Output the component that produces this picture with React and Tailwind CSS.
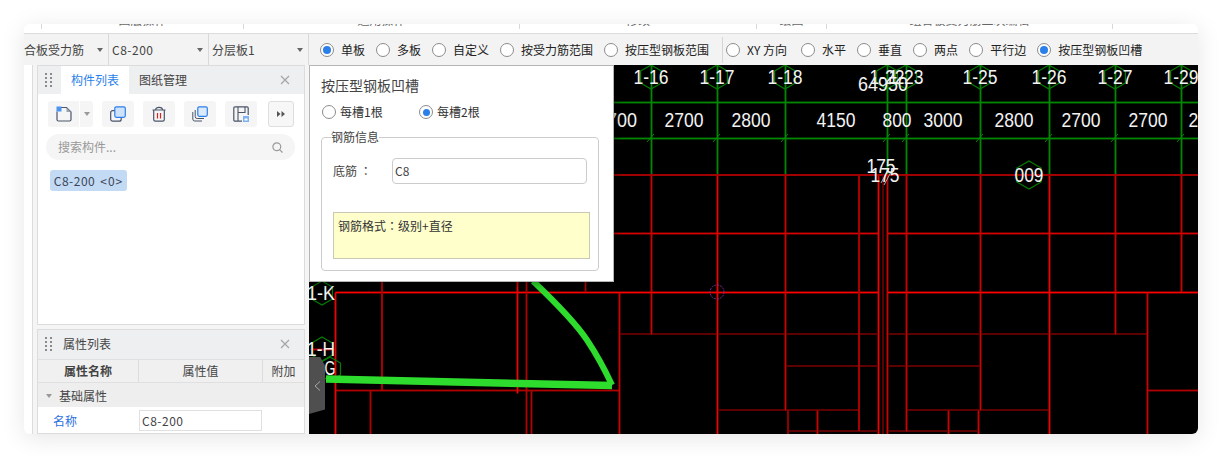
import React from "react";

const RED = "#f00000";
const DARK = "#d00000";
const DEEP = "#5c0000";
const GREEN = "#008800";

// [x1,y1,x2,y2,color,width]
const lines = [
  [613, 102, 1198, 102, GREEN, 1], [613, 138, 1198, 138, GREEN, 1],
  ...[651, 717, 785, 887, 906, 980, 1049, 1115, 1181].map((x) => [x, 65, x, 175, GREEN, 1]),
  [613, 175, 1198, 175, "#a00000", 2],
  [613, 233, 878, 233, "#d80000", 1], [887, 233, 1198, 233, "#d80000", 1],
  [335, 292, 878, 292, "#ff0000", 1], [887, 292, 1198, 292, "#ff0000", 1],
  [619, 334, 878, 334, DEEP, 2], [887, 334, 1147, 334, DEEP, 2],
  [785, 366, 878, 366, DEEP, 2], [887, 366, 980, 366, DEEP, 2],
  [717, 410, 859, 410, DEEP, 2], [906, 410, 1049, 410, DEEP, 2],
  [787, 431, 878, 431, DEEP, 2], [887, 431, 978, 431, DEEP, 2],
  [335, 390, 619, 390, "#b00000", 1], [1147, 390, 1198, 390, "#b00000", 1],
  [651, 175, 651, 334, DARK, 1], [717, 175, 717, 434, RED, 1], [785, 175, 785, 410, DARK, 1],
  [788, 410, 788, 434, "#8c0000", 2], [817, 410, 817, 434, DARK, 1], [859, 175, 859, 431, "#a80000", 2],
  [878, 175, 878, 434, RED, 1], [883, 175, 883, 434, DEEP, 2], [887, 175, 887, 434, DARK, 1],
  [906, 175, 906, 431, DARK, 1], [948, 410, 948, 434, DARK, 1], [978, 410, 978, 434, DARK, 1],
  [980, 175, 980, 410, DARK, 1], [1049, 175, 1049, 434, RED, 1], [1115, 175, 1115, 334, DARK, 1],
  [1147, 292, 1147, 434, DARK, 1], [1181, 175, 1181, 292, DARK, 1], [619, 292, 619, 434, DARK, 1],
  [335, 292, 335, 434, RED, 1], [382, 281, 382, 390, "#a80000", 2], [370, 390, 370, 434, "#b00000", 1],
  [517, 281, 517, 393, RED, 1], [526, 281, 526, 434, "#b00000", 1], [531, 390, 531, 434, "#b00000", 1],
  [585, 281, 585, 292, "#b00000", 1], [310, 349, 335, 349, "#c00000", 1],
];

// One-pixel lines sit on a pixel's centre; the reference's soft edge is a faint wider stroke beneath.
const snap = (v, w) => (w === 1 ? v + 0.5 : v);

const hexes = [[651, 77], [717, 77], [785, 77], [887, 77], [906, 77], [980, 77], [1049, 77], [1115, 77], [1181, 77], [1029, 175], [322, 293], [322, 349], [330, 369]];
const hexPts = (cx, cy, r = 12) =>
  [[0, -r], [r * 0.87, -r / 2], [r * 0.87, r / 2], [0, r], [-r * 0.87, r / 2], [-r * 0.87, -r / 2]]
    .map(([a, b]) => `${cx + a},${cy + b}`).join(" ");

// [text, centre x, baseline y, squeezed width]
const labels = [
  ["1-16", 651, 84, 35], ["1-17", 717, 84, 35], ["1-18", 785, 84, 35], ["1-22", 887, 84, 35], ["1-23", 906, 84, 35], ["1-25", 980, 84, 35], ["1-26", 1049, 84, 35], ["1-27", 1115, 84, 35], ["1-29", 1181, 84, 35],
  ["64950", 883, 91, 50],
  ["700", 622, 127, 30], ["2700", 684, 127, 39], ["2800", 751, 127, 39], ["4150", 836, 127, 39], ["800", 897, 127, 29], ["3000", 943, 127, 39], ["2800", 1014, 127, 39], ["2700", 1081, 127, 39], ["2700", 1148, 127, 39], ["2700", 1208, 127, 39],
  ["175", 881, 173, 29], ["175", 885, 182, 29], ["009", 1029, 182, 29],
  ["1-K", 321, 300, 28], ["1-H", 321, 356, 28], ["G", 330, 375, 11],
];

function CadCanvas() {
  return (
    <svg width="889" height="369" viewBox="309 65 889 369" className="block">
      <rect x="309" y="65" width="889" height="369" fill="#000" />
      {lines.filter((l) => l[5] === 1).map(([a, b, c, d, col], i) => (
        <line key={i} x1={a + 0.5} y1={b + 0.5} x2={c + 0.5} y2={d + 0.5} stroke={col} strokeOpacity="0.4" strokeWidth="3" />
      ))}
      {lines.map(([a, b, c, d, col, w], i) => (
        <line key={i} x1={snap(a, w)} y1={snap(b, w)} x2={snap(c, w)} y2={snap(d, w)} stroke={col} strokeWidth={w} />
      ))}
      {[651, 717, 785, 887, 906, 980, 1049, 1115, 1181].map((x) => (
        <line key={x} x1={x - 4} y1={142} x2={x + 3} y2={134} stroke={GREEN} strokeWidth="1" />
      ))}
      {hexes.map(([x, y], i) => (
        <polygon key={i} points={hexPts(x, y, i === 9 ? 14 : 12)} fill="none" stroke="#008000" strokeWidth="1.2" />
      ))}
      <circle cx="717" cy="292" r="7" fill="none" stroke="#7a2a90" strokeWidth="1" strokeDasharray="2 1" />
      <path d="M326 379 L612 385.5" fill="none" stroke="#2edc2e" strokeWidth="7.5" />
      <path d="M533 281 C555 302 575 322 587 340 C597 355 605 370 612 385" fill="none" stroke="#2edc2e" strokeWidth="6" />
      <path d="M881 183 L889 168 M884 185 L891 172" stroke="#aaaaaa" strokeWidth="1" />
      {labels.map(([t, x, y, w], i) => (
        <text key={i} x={x} y={y} textAnchor="middle" fontSize="20" textLength={w} lengthAdjust="spacingAndGlyphs" fill="#f2f2f2" fontFamily="'Liberation Sans', sans-serif">{t}</text>
      ))}
    </svg>
  );
}

function Radio({ checked, label, labelClass = "" }) {
  return (
    <span className="flex items-center gap-[7px] whitespace-nowrap">
      <span className="flex w-[14px] h-[14px] shrink-0 items-center justify-center rounded-full border border-[#8c8c8c] bg-white">
        {checked && <span className="block w-[8px] h-[8px] rounded-full bg-[#2b7fe8]" />}
      </span>
      <span className={labelClass}>{label}</span>
    </span>
  );
}

function Dropdown({ label, className, textClass = "" }) {
  return (
    <div className={`relative flex h-full items-center overflow-hidden border-r border-[#d9d9d9] text-[#444] ${className}`}>
      <span className={`whitespace-nowrap text-[12px] ${textClass}`}>{label}</span>
      <span className="absolute right-[5px] top-[14px] w-0 h-0 border-x-[3px] border-x-transparent border-t-[4px] border-t-[#666]" />
    </div>
  );
}

function Grip() {
  return (
    <svg width="7" height="14" viewBox="0 0 7 14" fill="#8a8a8a" className="shrink-0">
      {[0, 4, 8, 12].map((y) => (
        <g key={y}>
          <rect x="0" y={y} width="2" height="2" />
          <rect x="5" y={y} width="2" height="2" />
        </g>
      ))}
    </svg>
  );
}

function Close() {
  return (
    <svg width="10" height="10" viewBox="0 0 10 10" stroke="#a5a5a5" strokeWidth="1.2" className="shrink-0">
      <path d="M1 1 L9 9 M9 1 L1 9" />
    </svg>
  );
}

function ToolBtn({ children }) {
  return (
    <div className="flex h-[26px] w-[32px] items-center justify-center rounded-[3px] bg-[#f5f5f5]">{children}</div>
  );
}

const IconNew = () => (
  <svg width="16" height="16" viewBox="0 0 16 16" fill="none" className="-mt-px">
    <path d="M5 1.5 H10.5 L15 6 V13.5 a1.5 1.5 0 0 1 -1.5 1.5 H2.5 a1.5 1.5 0 0 1 -1.5 -1.5 V5.5" stroke="#4a5468" strokeWidth="1.2" />
    <path d="M10.5 1.5 V6 H15" fill="#9aa2b0" />
    <rect x="0.5" y="0.5" width="5" height="5" fill="#4d94ef" />
  </svg>
);
const IconCopy = () => (
  <svg width="16" height="16" viewBox="0 0 16 16" fill="none">
    <rect x="0.7" y="4.7" width="10.5" height="10.5" rx="2" stroke="#4a5468" strokeWidth="1.2" />
    <rect x="4.8" y="0.8" width="10.5" height="10.5" rx="1.5" fill="#cfe2fb" stroke="#2b7fe8" strokeWidth="1.2" />
  </svg>
);
const IconTrash = () => (
  <svg width="14" height="16" viewBox="0 0 14 16" fill="none" stroke="#4a5468" strokeWidth="1.2">
    <path d="M0.5 4 H13.5 M3.5 4 C3.5 0.5 10.5 0.5 10.5 4 M1.7 4 V13.5 a1.7 1.7 0 0 0 1.7 1.7 H10.6 a1.7 1.7 0 0 0 1.7 -1.7 V4" />
    <path d="M5.5 7 V12.5 M8.5 7 V12.5" stroke="#e02020" />
  </svg>
);
const IconStack = () => (
  <svg width="16" height="16" viewBox="0 0 16 16" fill="none">
    <path d="M0.8 6 V13 a2 2 0 0 0 2 2 H10" stroke="#4a5468" />
    <path d="M3.2 4 V10.5 a2 2 0 0 0 2 2 H12" stroke="#4a5468" />
    <rect x="5.8" y="0.8" width="9.5" height="9.5" rx="1.5" fill="#dbe9fc" stroke="#2b7fe8" strokeWidth="1.2" />
  </svg>
);
const IconSave = () => (
  <svg width="16" height="16" viewBox="0 0 16 16" fill="none">
    <path d="M9 15.2 H2 a1.2 1.2 0 0 1 -1.2 -1.2 V2 a1.2 1.2 0 0 1 1.2 -1.2 H14 a1.2 1.2 0 0 1 1.2 1.2 V9" stroke="#4a5468" strokeWidth="1.2" />
    <path d="M5 1 V15 M5 6.5 H12 V1" stroke="#4a5468" strokeWidth="1.1" />
    <rect x="10" y="10" width="6" height="6" fill="#7fb1f3" />
    <rect x="11.5" y="12.5" width="3" height="2" fill="#fff" />
  </svg>
);

function ComponentPanel() {
  return (
    <section className="h-[260px] shrink-0 border border-[#dcdcdc] bg-white">
      <div className="flex h-[28px] items-center bg-[#eeeff1] pl-[7px] pr-[14px] text-[12px]">
        <Grip />
        <div className="ml-[9px] flex h-full w-[68px] items-center justify-center bg-white text-[#2b7fe8]">构件列表</div>
        <div className="ml-[10px] flex-1 text-[#444]">图纸管理</div>
        <Close />
      </div>
      <div className="mt-[7px] flex items-center pl-[10px]">
        <div className="flex h-[26px] w-[45px] overflow-hidden rounded-[3px] bg-[#f5f5f5]">
          <div className="flex w-[32px] items-center justify-center border-r border-white"><IconNew /></div>
          <div className="flex flex-1 items-center justify-center">
            <span className="w-0 h-0 border-x-[3px] border-x-transparent border-t-[4px] border-t-[#999]" />
          </div>
        </div>
        <div className="ml-[9px] flex gap-[9px]">
          <ToolBtn><IconCopy /></ToolBtn>
          <ToolBtn><IconTrash /></ToolBtn>
          <ToolBtn><IconStack /></ToolBtn>
          <ToolBtn><IconSave /></ToolBtn>
        </div>
        <div className="ml-[11px] flex h-[26px] w-[26px] items-center justify-center rounded-[3px] border border-[#dedede] bg-[#f7f7f7]">
          <svg width="8" height="6" viewBox="0 0 8 6" fill="#555"><path d="M0 0 L3.5 3 L0 6Z M4.5 0 L8 3 L4.5 6Z" /></svg>
        </div>
      </div>
      <div className="ml-[8px] mr-[9px] mt-[7px] flex h-[26px] items-center justify-between rounded-full bg-[#f5f5f5] pl-[12px] pr-[12px] text-[12px] text-[#999]">
        <span>搜索构件...</span>
        <svg width="11" height="11" viewBox="0 0 11 11" fill="none" stroke="#9a9a9a" strokeWidth="1.2"><circle cx="4.8" cy="4.8" r="3.9" /><path d="M7.8 7.8 L10.5 10.5" /></svg>
      </div>
      <div className="ml-[12px] mt-[10px] flex h-[21px] w-[77px] items-center justify-center gap-[5px] whitespace-nowrap rounded-[3px] bg-[#c2daf3] text-[12px] text-[#3c4658]">
        <span className="tracking-[0.5px]">C8-200</span>
        <span className="tracking-[1px]">&lt;0&gt;</span>
      </div>
    </section>
  );
}

function PropertyPanel() {
  return (
    <section className="mt-[4px] flex-1 border border-[#dcdcdc] bg-white">
      <div className="flex h-[29px] items-center bg-[#eeeff1] pb-[2px] pl-[7px] pr-[14px] text-[12px] text-[#444]">
        <Grip />
        <span className="ml-[11px] flex-1">属性列表</span>
        <Close />
      </div>
      <div className="grid h-[24px] grid-cols-[101px_124px_41px] border-y border-[#e0e0e0] bg-[#f0f0f0] text-[12px] text-[#444]">
        <div className="flex items-center justify-center border-r border-[#dcdcdc] font-bold">属性名称</div>
        <div className="flex items-center justify-center border-r border-[#dcdcdc]">属性值</div>
        <div className="flex items-center justify-center">附加</div>
      </div>
      <div className="flex h-[24px] items-center bg-[#eeeeee] pl-[8px] pt-[2px] text-[12px] text-[#444]">
        <span className="w-0 h-0 border-x-[3px] border-x-transparent border-t-[4px] border-t-[#999]" />
        <span className="ml-[7px]">基础属性</span>
      </div>
      <div className="flex items-center pt-[3px] text-[12px]">
        <span className="w-[101px] pl-[15px] text-[#2b6fe0]">名称</span>
        <div className="flex h-[21px] w-[123px] items-center border border-[#e0e0e0] pl-[2px] tracking-[0.5px] text-[#444]">C8-200</div>
      </div>
    </section>
  );
}

function RadioTight({ checked, label }) {
  return (
    <span className="flex items-center gap-[4px] whitespace-nowrap">
      <span className="flex w-[14px] h-[14px] shrink-0 items-center justify-center rounded-full border border-[#8c8c8c] bg-white">
        {checked && <span className="block w-[7px] h-[7px] rounded-full bg-[#2b7fe8]" />}
      </span>
      <span>{label}</span>
    </span>
  );
}

function Dialog() {
  return (
    <div className="absolute left-0 top-0 h-[217px] w-[305px] border border-[#b5b5b5] bg-white pl-[11px] text-[12px] text-[#444] shadow-[0_0_10px_rgba(0,0,0,0.55)]">
      <div className="mt-[9px] text-[14px] leading-[20px]">按压型钢板凹槽</div>
      <div className="mt-[9px] flex h-[16px] items-center pl-[1px] text-[#333]">
        <span className="w-[97px]"><RadioTight label="每槽1根" /></span>
        <RadioTight checked label="每槽2根" />
      </div>
      <fieldset className="mt-[11px] h-[140px] w-[278px] rounded-[4px] border border-[#cccccc]">
        <legend className="ml-[9px] px-0 leading-[12px]">钢筋信息</legend>
        <div className="mt-[15px] flex items-center pl-[11px]">
          <span className="w-[59px] font-['Noto_Sans_CJK_TC',sans-serif]">底筋 ：</span>
          <div className="flex h-[26px] w-[195px] items-center rounded-[4px] border border-[#cccccc] pl-[2px]">C8</div>
        </div>
        <div className="ml-[11px] mt-[28px] h-[47px] w-[257px] border border-[#c8c8b4] bg-[#ffffcc] pl-[4px] pt-[4px] font-['Noto_Sans_CJK_TC',sans-serif] text-[#333]">钢筋格式：级别+直径</div>
      </fieldset>
    </div>
  );
}

export default function App() {
  return (
    <div className="h-[457px] w-[1221px] overflow-hidden bg-white pl-[24px] pt-[24px] font-['Noto_Sans_CJK_SC','Noto_Sans',sans-serif]">
      <div className="flex h-[410px] w-[1174px] flex-col overflow-hidden rounded-[6px] bg-white shadow-[0_4px_24px_rgba(0,0,0,0.10)]">
        {/* clipped ribbon captions */}
        <div className="grid h-[10px] shrink-0 grid-cols-[18px_202px_276px_237px_70px_286px_85px] items-start overflow-hidden border-b border-[#dcdcdc] text-[12px] leading-[12px] text-[#666]">
          {["", "图层操作", "通用操作", "修改", "绘图", "组合板受力筋二次编辑", ""].map((t, i) => (
            <div key={i} className="h-[5px] overflow-hidden border-r border-[#d9d9d9] text-center last:border-r-0">
              <span className="relative -top-[10px] block">{t}</span>
            </div>
          ))}
        </div>
        {/* toolbar */}
        <div className="flex h-[31px] shrink-0 items-center bg-[#f3f3f3] text-[12px] text-[#222]">
          <Dropdown label="合板受力筋" className="w-[85px]" />
          <Dropdown label="C8-200" className="w-[100px] pl-[3px]" textClass="tracking-[0.5px]" />
          <Dropdown label="分层板1" className="w-[100px] pl-[3px]" />
          <div className="ml-[11px] flex items-center gap-[11px]">
            <Radio checked label="单板" />
            <Radio label="多板" />
            <Radio label="自定义" />
            <Radio label="按受力筋范围" />
            <Radio label="按压型钢板范围" />
          </div>
          <span className="ml-[13px] mr-[3px] h-[26px] w-px bg-[#d5d5d5]" />
          <div className="flex items-center gap-[11px]">
            <Radio label="XY 方向" labelClass="w-[43px]" />
            <Radio label="水平" />
            <Radio label="垂直" />
            <Radio label="两点" />
            <Radio label="平行边" />
            <Radio checked label="按压型钢板凹槽" />
          </div>
        </div>
        {/* body */}
        <div className="flex h-[369px] shrink-0">
          <aside className="flex h-full w-[285px] shrink-0 bg-[#f5f5f5]">
            <div className="h-full w-[9px] border-r border-[#dcdcdc] bg-white" />
            <div className="ml-[4px] flex h-full w-[268px] flex-col">
              <ComponentPanel />
              <PropertyPanel />
            </div>
          </aside>
          <main className="relative h-full w-[889px] shrink-0 overflow-hidden">
            <CadCanvas />
            <Dialog />
            <div className="absolute left-0 top-[292px] flex h-[57px] w-[16px] items-center justify-center bg-[#4f4f4f] [clip-path:polygon(0_0,70%_0,100%_15%,100%_92%,0_100%)]">
              <svg width="7" height="10" viewBox="0 0 7 10" fill="none" stroke="#a8a8a8" strokeWidth="1"><path d="M6 0.5 L1 5 L6 9.5" /></svg>
            </div>
          </main>
        </div>
      </div>
    </div>
  );
}
